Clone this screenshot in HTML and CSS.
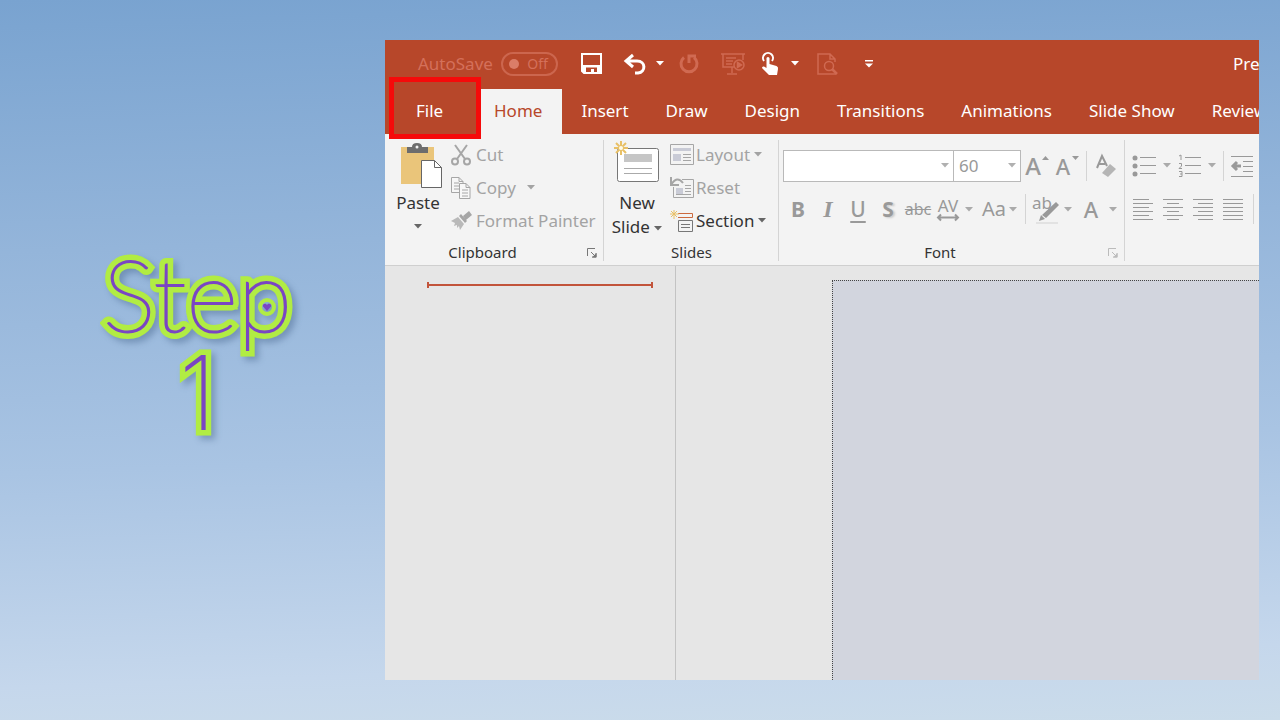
FILE: index.html
```html
<!DOCTYPE html>
<html lang="en">
<head>
<meta charset="utf-8">
<title>Step 1</title>
<link rel="stylesheet" href="styles.css">
</head>
<body>
<svg class="defs" aria-hidden="true">
  <symbol id="caret" viewBox="0 0 8 5"><path d="M0 0h8L4 4.500z" fill="currentColor"/></symbol>
  <symbol id="launcher" viewBox="0 0 10 10"><path d="M.5 8V.5H8M4 4l4 4M9 5v4H5" fill="none" stroke="currentColor"/><path d="M9.500 5v4.500H5z" fill="currentColor"/></symbol>
</svg>
<main class="page">
  <h1 class="caption">
    <span class="word" data-text="Step">Step</span>
    <span class="word digit" data-text="1">1</span>
    <svg class="heart" viewBox="0 0 20 20" aria-hidden="true"><circle cx="10" cy="10" r="7" fill="none" stroke="#b1ec43" stroke-width="4"/><path d="M10 14 6 9.500C5 7 8.500 5.500 10 8c1.500-2.500 5-1 4 1.500z" fill="#7a45c4"/></svg>
  </h1>
  <section class="window">
    <header class="titlebar">
      <label class="autosave"><span>AutoSave</span><button class="switch" disabled><i class="knob"></i>Off</button></label>
      <button class="qa save" aria-label="Save"><svg width="21" height="21" viewBox="0 0 21 21"><path d="M1 1h19v19H3l-2-2z" fill="none" stroke="#fff" stroke-width="2"/><path d="M2 12h17v8H2z" fill="#fff"/><path d="M5 14.500h11V19h-3v-3h-3v3H5z" fill="#b7472a"/></svg></button>
      <button class="qa undo" aria-label="Undo"><svg width="24" height="20" viewBox="0 0 24 20"><path d="M10 1 3 7l7 6M3 7h11c9 0 9 11 1 12h-3" fill="none" stroke="#fff" stroke-width="3"/></svg></button>
      <button class="qa" aria-label="Undo options"><svg class="caret"><use href="#caret"/></svg></button>
      <button class="qa redo" aria-label="Repeat" disabled><svg width="20" height="21" viewBox="0 0 20 21"><path d="M5 4.500A8 8 0 1 0 15 4.500M10 10V3h7" fill="none" stroke="#d06a52" stroke-width="3"/></svg></button>
      <button class="qa show" aria-label="Start slide show" disabled><svg width="24" height="22" viewBox="0 0 24 22" fill="none" stroke="#d06a52" stroke-width="1.500"><path d="M0 1h24M2 1v13h11M22 1v6M5 5h10M5 8h7M5 11h6M11 14v6M6 21h10"/><circle cx="18" cy="12" r="5"/><path d="m16.500 9.500 4 2.500-4 2.500z" fill="#d06a52"/></svg></button>
      <button class="qa touch" aria-label="Touch mode"><svg width="18" height="22" viewBox="0 0 18 22"><path d="M3 8a5 5 0 1 1 8 0" fill="none" stroke="#fff" stroke-width="2"/><path d="M5.500 5q1.500-2 3 0v6l7 2q2 1 1.500 3L16 22H8l-7-7q0-2 2-1.500l2.500 1.500z" fill="#fff"/></svg></button>
      <button class="qa" aria-label="Touch mode options"><svg class="caret"><use href="#caret"/></svg></button>
      <button class="qa preview" aria-label="Print preview" disabled><svg width="21" height="22" viewBox="0 0 21 22" fill="none" stroke="#d06a52" stroke-width="1.500"><path d="M19 21H1V1h12l5 5v3M13 1v5h5"/><circle cx="12" cy="13" r="4.500"/><path d="m15 16 5 5" stroke-width="2.500"/></svg></button>
      <button class="qa customize" aria-label="Customize toolbar"><svg width="8" height="8" viewBox="0 0 8 8"><path d="M0 0h8v1.500H0zM0 3.500h8L4 7.500z" fill="#fff"/></svg></button>
      <span class="doc-title">Pre</span>
    </header>
    <nav class="tabs">
      <button class="tab file">File</button>
      <button class="tab active">Home</button>
      <button class="tab">Insert</button>
      <button class="tab">Draw</button>
      <button class="tab">Design</button>
      <button class="tab">Transitions</button>
      <button class="tab">Animations</button>
      <button class="tab">Slide Show</button>
      <button class="tab">Review</button>
    </nav>
    <div class="ribbon">
      <section class="group clipboard">
        <div class="tools">
          <button class="big paste"><svg width="42" height="46" viewBox="0 0 42 46"><path d="M1 5h33v37H1z" fill="#eac57a"/><path d="M7 11V5h5q0-4 5-4t5 4h6v6z" fill="#6d6d6d"/><circle cx="17" cy="5" r="1.500" fill="#f3f3f3"/><path d="M21.500 18.500h13l7 7v20h-20z" fill="#fff" stroke="#666"/><path d="M34.500 18.500v7h7" fill="none" stroke="#666"/></svg><span>Paste</span><svg class="caret"><use href="#caret"/></svg></button>
          <div class="stack">
            <button class="row" disabled><svg width="20" height="22" viewBox="0 0 20 22" fill="none" stroke="#a6a6a6" stroke-width="2"><path d="m4 1 10 14M16 1 6 15"/><circle cx="4" cy="17.500" r="3"/><circle cx="16" cy="17.500" r="3"/></svg>Cut</button>
            <button class="row" disabled><svg width="20" height="22" viewBox="0 0 20 22" fill="#f7f7f7" stroke="#a6a6a6"><path d="M.5.500H8l4 4v11H.5zM8 .5v4h4M3 6h5M3 9h5M3 12h5"/><path d="M8.500 6.500H15l4 4v11H8.500zM15 6.500v4h4M11 13h6M11 16h6M11 19h6"/></svg>Copy<svg class="caret"><use href="#caret"/></svg></button>
            <button class="row" disabled><svg width="20" height="20" viewBox="0 0 20 20" fill="#a6a6a6"><path d="m18 0 3 4-6 5-3-4zM10 3l6 7-2 2-6-7z"/><path d="m7 6 6 7-4 6-1-4-2 2 0-3-3 1 1-3-4-2z" fill="#b9b9b9"/></svg>Format Painter</button>
          </div>
        </div>
        <footer class="group-label">Clipboard<button class="launch" aria-label="Clipboard options"><svg width="10" height="10"><use href="#launcher"/></svg></button></footer>
      </section>
      <section class="group slides">
        <div class="tools">
          <button class="big new"><svg width="46" height="42" viewBox="0 0 46 42"><rect x="3.500" y="7.500" width="41" height="33" rx="2" fill="#fff" stroke="#777"/><path d="M10 13h28v8H10z" fill="#c6c6c6"/><path d="M10 27.500h28M10 32.500h28" stroke="#aaa"/><path d="M7 0v14M0 7h14M2 2l10 10M12 2 2 12" stroke="#e8c067" stroke-width="2"/><circle cx="7" cy="7" r="2" fill="#fffbe8"/></svg><span>New<br>Slide <svg class="caret"><use href="#caret"/></svg></span></button>
          <div class="stack">
            <button class="row" disabled><svg width="24" height="21" viewBox="0 0 24 21" fill="none" stroke="#a6a6a6"><path d="M.5.500h23v20H.5z"/><path d="M3 4h18v3H3zM3 10h8v7H3z" fill="#c9cbd6" stroke="none"/><path d="M13 10.500h8M13 13.500h8M13 16.500h8"/></svg>Layout<svg class="caret"><use href="#caret"/></svg></button>
            <button class="row" disabled><svg width="24" height="21" viewBox="0 0 24 21" fill="none" stroke="#a6a6a6"><path d="M12 2.500h11.500v18h-20V10"/><path d="M6 11h7v7H6z" fill="#c9cbd6" stroke="none"/><path d="M15 8.500h6M15 11.500h6M15 14.500h6M6 17.500h15"/><path d="M1 0v8h8M1 8q6-10 12-2" stroke-width="2"/></svg>Reset</button>
            <button class="row dark"><svg width="24" height="22" viewBox="0 0 24 22" fill="none" stroke="#777"><path d="M8 3.500h14.500v4H8" stroke="#cc6a3f"/><path d="M8.500 10.500h14v11h-14zM11 14.500h9M11 17.500h9"/><path d="M4 0v9M0 4h9M1 1l6 6M7 1 1 7" stroke="#e8c067"/></svg>Section<svg class="caret"><use href="#caret"/></svg></button>
          </div>
        </div>
        <footer class="group-label">Slides</footer>
      </section>
      <section class="group font">
        <div class="bars">
          <div class="bar">
            <span class="combo name"><select aria-label="Font" disabled><option></option></select><svg class="caret"><use href="#caret"/></svg></span>
            <span class="combo size"><select aria-label="Font size" disabled><option>60</option></select><svg class="caret"><use href="#caret"/></svg></span>
            <button class="tool grow" disabled aria-label="Grow font">A<svg class="mini" width="7" height="4" viewBox="0 0 7 4"><path d="M0 4 3.500 0 7 4z"/></svg></button>
            <button class="tool shrink" disabled aria-label="Shrink font">A<svg class="mini" width="7" height="4" viewBox="0 0 7 4"><path d="M0 0h7L3.500 4z"/></svg></button>
            <i class="sep"></i>
            <button class="tool" disabled aria-label="Clear formatting"><svg width="20" height="22" viewBox="0 0 20 22"><path d="M1 13 6 1l5 10M3 9h6" fill="none" stroke="#999" stroke-width="2"/><path d="m14 9 6 5-8 8-6-4z" fill="#b5b5b5"/></svg></button>
          </div>
          <div class="bar">
            <button class="tool bold" disabled>B</button>
            <button class="tool italic" disabled>I</button>
            <button class="tool underline" disabled>U</button>
            <button class="tool shadow" disabled>S</button>
            <button class="tool strike" disabled>abc</button>
            <button class="tool spacing" disabled>AV<svg width="22" height="7" viewBox="0 0 22 7"><path d="M2 3.500h18M4 .5l-3 3 3 3M18 .5l3 3-3 3" fill="none" stroke="#999" stroke-width="2"/></svg></button>
            <button class="tool drop" disabled aria-label="Spacing options"><svg class="caret"><use href="#caret"/></svg></button>
            <button class="tool case" disabled>Aa</button>
            <button class="tool drop" disabled aria-label="Case options"><svg class="caret"><use href="#caret"/></svg></button>
            <i class="sep"></i>
            <button class="tool marker" disabled>ab<svg class="pen" width="22" height="22" viewBox="0 0 22 22"><path d="m20 0 3 3L10 16l-4-3zM5 13l4 4-6 2z" fill="#999"/><path d="M0 20h22v2H0z" fill="#e2e2e2"/></svg></button>
            <button class="tool drop" disabled aria-label="Highlight options"><svg class="caret"><use href="#caret"/></svg></button>
            <button class="tool color" disabled>A</button>
            <button class="tool drop" disabled aria-label="Colour options"><svg class="caret"><use href="#caret"/></svg></button>
          </div>
        </div>
        <footer class="group-label">Font<button class="launch" aria-label="Font options" disabled><svg width="10" height="10"><use href="#launcher"/></svg></button></footer>
      </section>
      <section class="group paragraph">
        <div class="bars">
          <div class="bar lists">
            <button class="tool" disabled aria-label="Bullets"><svg width="24" height="22" viewBox="0 0 24 22"><path d="M8 2.500h16M8 10.500h16M8 18.500h16" stroke="#999"/><g fill="#999"><circle cx="3" cy="3" r="2.500"/><circle cx="3" cy="11" r="2.500"/><circle cx="3" cy="19" r="2.500"/></g></svg></button>
            <button class="tool drop" disabled aria-label="Bullet options"><svg class="caret"><use href="#caret"/></svg></button>
            <button class="tool" disabled aria-label="Numbering"><svg width="23" height="24" viewBox="0 0 23 24" fill="none" stroke="#999"><path d="M7 3.500h16M7 11.500h16M7 19.500h16M1 2l2-1v5M1 9.500h2.500V12L1 14.500h3M1 17.500h3v5H1M2 20h2"/></svg></button>
            <button class="tool drop" disabled aria-label="Numbering options"><svg class="caret"><use href="#caret"/></svg></button>
            <i class="sep"></i>
            <button class="tool" disabled aria-label="Decrease indent"><svg width="22" height="22" viewBox="0 0 22 22" fill="none" stroke="#999"><path d="M0 1.500h22M12 6.500h10M12 11.500h10M12 16.500h10M0 21.500h22"/><path d="M2 11h8M6 7l-4 4 4 4" stroke-width="3"/></svg></button>
          </div>
          <div class="bar aligns">
            <button class="tool" disabled aria-label="Align left"><svg width="20" height="22" viewBox="0 0 20 22" stroke="#999"><path d="M0 1.500h16M0 5.500h20M0 9.500h16M0 13.500h20M0 17.500h16M0 21.500h20"/></svg></button>
            <button class="tool" disabled aria-label="Centre"><svg width="20" height="22" viewBox="0 0 20 22" stroke="#999"><path d="M0 1.500h20M4 5.500h12M0 9.500h20M4 13.500h12M0 17.500h20M4 21.500h12"/></svg></button>
            <button class="tool" disabled aria-label="Align right"><svg width="20" height="22" viewBox="0 0 20 22" stroke="#999"><path d="M0 1.500h20M5 5.500h15M0 9.500h20M5 13.500h15M0 17.500h20M5 21.500h15"/></svg></button>
            <button class="tool" disabled aria-label="Justify"><svg width="20" height="22" viewBox="0 0 20 22" stroke="#999"><path d="M0 1.500h20M0 5.500h20M0 9.500h20M0 13.500h20M0 17.500h20M0 21.500h20"/></svg></button>
            <i class="sep"></i>
          </div>
        </div>
      </section>
    </div>
    <div class="workspace">
      <aside class="thumbs"><div class="insertion"></div></aside>
      <div class="canvas"><div class="slide"></div></div>
    </div>
  </section>
</main>
</body>
</html>
```

FILE: styles.css
```css
* { box-sizing: border-box; }
body {
  margin: 0;
  font-family: "Noto Sans", "Open Sans", sans-serif;
  font-size: 17px;
  line-height: 24px;
  color: #333;
}
button { font: inherit; color: inherit; background: none; border: 0; padding: 0; margin: 0; white-space: nowrap; }
svg { display: block; flex: none; overflow: visible; }
.defs { position: absolute; width: 0; height: 0; }
.caret { width: 8px; height: 5px; }

.page {
  display: grid;
  grid-template-columns: 385px minmax(0, 1fr);
  min-height: 100vh;
  padding: 40px 21px 40px 0;
  background: linear-gradient(178deg, #79a3d0 0%, #94b5da 33%, #a9c4e3 62%, #c5d7ec 90%, #cbdcea 100%);
}

.caption {
  position: relative;
  align-self: center;
  justify-self: center;
  display: flex;
  flex-direction: column;
  align-items: center;
  margin: 0;
  padding: 0 0 34px 10px;
  font: 100 100px/96px Lato, sans-serif;
  color: #7a45c4;
  filter: drop-shadow(4px 4px 3px rgba(60, 90, 130, .4));
}
.word {
  position: relative;
  z-index: 0;
  -webkit-text-stroke: 2px #7a45c4;
}
.word::before {
  content: attr(data-text);
  position: absolute;
  left: 0;
  top: 0;
  z-index: -1;
  -webkit-text-stroke: 13px #b1ec43;
}
.digit { margin-top: 4px; font-family: Inter, sans-serif; }
.heart { position: absolute; right: 15px; top: 52px; width: 20px; height: 20px; }

.window { display: flex; flex-direction: column; overflow: hidden; background: #e6e6e6; }

.titlebar { display: flex; align-items: center; height: 49px; padding: 0 0 2px 33px; background: #b7472a; color: #fff; }
.autosave { display: flex; align-items: center; gap: 8px; color: #d4705a; }
.switch { display: flex; align-items: center; justify-content: space-between; width: 57px; height: 24px; padding: 0 8px 0 6px; border: 2px solid #cc664e; border-radius: 12px; font-size: 14px; }
.knob { width: 10px; height: 10px; border-radius: 50%; background: #da7d68; }
.save { margin-left: 23px; }
.undo { margin: 0 9px 0 21px; }
.redo { margin: 0 22px 0 15px; }
.touch { margin: 0 12px 0 16px; }
.preview { margin: 0 27px 0 18px; }
.doc-title { width: 26px; margin-left: auto; }

.tabs { display: flex; height: 45px; background: #b7472a; color: #fff; }
.tab { padding: 0 18px 2px 19px; }
.file { position: relative; width: 96px; padding: 0 39px 2px 31px; }
.file::after { content: ""; position: absolute; inset: -12px 0 -5px 4px; border: 5px solid #f50a0a; z-index: 1; }
.active { padding: 0 20px 2px 13px; background: #f3f3f3; color: #b7472a; }

.ribbon { display: flex; height: 132px; background: #f3f3f3; border-bottom: 1px solid #cfcfcf; }
.group { display: flex; flex: none; flex-direction: column; padding: 4px 0 0; position: relative; }
.group::after { content: ""; position: absolute; right: 0; top: 6px; bottom: 4px; width: 1px; background: #d4d4d4; }
.clipboard { width: 219px; }
.slides { width: 175px; }
.font { width: 346px; }
.paragraph { flex: 1; }
.paragraph::after { display: none; }
.tools { display: flex; height: 102px; }
.big { display: flex; flex-direction: column; align-items: center; width: 66px; padding-top: 4px; }
.big > span { margin-top: 3px; }
.big > .caret { margin-top: 9px; color: #666; }
.paste > svg:first-child { align-self: flex-end; margin-right: 9px; }
.new .caret { display: inline-block; vertical-align: middle; color: #666; }
.new { padding-top: 3px; }
.new > span { margin-top: 8px; }
.stack { display: flex; flex-direction: column; }
.row { display: flex; align-items: center; gap: 5px; height: 33px; color: #a3a3a3; }
.row .caret { margin-left: 6px; }
.slides .row { gap: 2px; }
.slides .row .caret { margin-left: 2px; }
.row.dark { color: #333; }
.row.dark .caret { color: #666; }
.group-label { position: relative; font-size: 15px; text-align: center; padding-right: 24px; }
.slides .group-label { padding-right: 0; }
.launch { position: absolute; right: 7px; top: 8px; color: #777; }
.launch:disabled { color: #bbb; }

.bars { display: flex; flex-direction: column; height: 102px; padding-top: 5px; }
.bar { display: flex; align-items: center; height: 45px; padding-left: 4px; color: #999; }
.bar + .bar { height: 42px; }
.combo { position: relative; height: 32px; }
.combo select { appearance: none; width: 100%; height: 32px; margin: 0; padding: 0 5px; border: 1px solid #b9b9b9; border-radius: 0; background: #fff; color: #999; font: inherit; opacity: 1; }
.combo .caret { position: absolute; right: 5px; top: 13px; color: #b0b0b0; }
.name { width: 171px; }
.size { width: 68px; margin-left: -1px; }
.tool { position: relative; display: flex; align-items: center; justify-content: center; color: #999; }
.tool.drop { width: 8px; color: #aaa; }
.sep { width: 1px; height: 30px; background: #d4d4d4; }
.grow, .shrink { width: 30px; font-size: 22px; font-weight: 500; padding-right: 6px; }
.grow { font-size: 24px; }
.mini { position: absolute; right: 2px; top: 2px; fill: #999; }
.bar .shrink + .sep { margin: 0 9px 0 5px; }
.bold, .italic, .underline, .shadow, .strike, .spacing, .case, .marker, .color { width: 30px; font-size: 21px; }
.bold, .shadow { font-weight: 700; }
.italic { font-family: "Liberation Serif", serif; font-style: italic; font-size: 24px; font-weight: 700; }
.underline { text-decoration: underline; text-underline-offset: 4px; font-weight: 500; }
.shadow { text-shadow: 2px 1px 2px #ccc; }
.strike { font-size: 16px; text-decoration: line-through; }
.spacing { flex-direction: column; font-size: 17px; line-height: 17px; }
.spacing + .drop { margin: 0 6px 0 2px; }
.case { font-size: 20px; }
.case + .drop { margin-right: 8px; }
.marker { margin-left: 5px; font-size: 17px; line-height: 14px; padding: 0 8px 12px 0; }
.pen { position: absolute; left: 5px; bottom: -2px; }
.marker + .drop { margin: 0 4px 0 3px; }
.color { font-size: 22px; font-weight: 500; }
.color + .drop { margin-left: 3px; }
.lists { gap: 7px; padding-left: 7px; }
.aligns { gap: 10px; padding-left: 8px; }

.workspace { display: grid; grid-template-columns: 291px minmax(0, 1fr); flex: 1; }
.thumbs { padding: 16px 22px 0 42px; border-right: 1px solid #c3c3c3; }
.insertion { height: 6px; border: solid #c2543b; border-width: 0 2px; background: linear-gradient(#c2543b, #c2543b) center / 100% 2px no-repeat; }
.canvas { display: flex; padding: 14px 0 0 156px; }
.slide { flex: 1; background: #d2d5de; border: dotted #444; border-width: 1px 0 0 1px; }
```
